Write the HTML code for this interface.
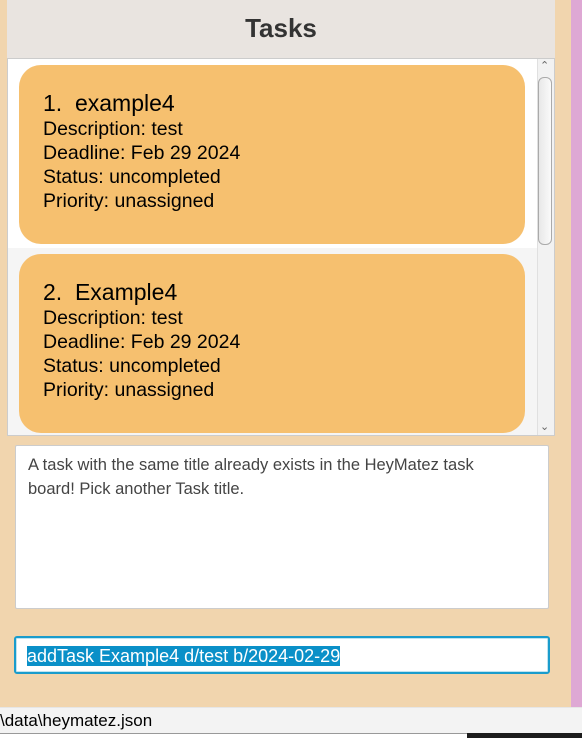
<!DOCTYPE html><html><head><style>
body{margin:0;width:582px;height:738px;position:relative;overflow:hidden;background:#f1d5ae;font-family:"Liberation Sans",sans-serif}
div{position:absolute;box-sizing:border-box}
.card{left:19px;width:506px;height:179px;background:#f6c06f;border-radius:22px;padding:24px 0 0 24px;font-size:19.5px;line-height:24px;color:#000}
.card .t{font-size:23px;line-height:28px;margin-bottom:0}
</style></head><body>
<div style="left:571px;top:0;width:11px;height:707px;background:#dea8d4"></div>
<div style="left:7px;top:0;width:548px;height:58px;background:#e9e4e0;text-align:center;font-weight:bold;font-size:26px;line-height:56px;color:#333">Tasks</div>
<div style="left:7px;top:58px;width:548px;height:378px;background:#fff;border:1px solid #ccc"></div>
<div style="left:8px;top:248px;width:529px;height:187px;background:#f5f5f5"></div>
<div class="card" style="top:65px"><div style="position:static" class="t">1.&nbsp;&nbsp;example4</div>Description: test<br>Deadline: Feb 29 2024<br>Status: uncompleted<br>Priority: unassigned</div>
<div class="card" style="top:254px"><div style="position:static" class="t">2.&nbsp;&nbsp;Example4</div>Description: test<br>Deadline: Feb 29 2024<br>Status: uncompleted<br>Priority: unassigned</div>
<div style="left:537px;top:59px;width:17px;height:376px;background:#f2f2f2;border-left:1px solid #e0e0e0"></div>
<div style="left:538px;top:77px;width:14px;height:168px;background:linear-gradient(90deg,#e8e8e8,#fafafa);border:1px solid #aaa;border-radius:6px"></div>
<div style="left:540px;top:59px;font-size:11px;color:#666">&#8963;</div>
<div style="left:540px;top:420px;font-size:11px;color:#666">&#8964;</div>
<div style="left:15px;top:445px;width:534px;height:164px;background:#fff;border:1px solid #ccc;border-radius:2px;padding:7px 30px 0 12px;font-size:16.5px;line-height:24px;color:#444">A task with the same title already exists in the HeyMatez task board! Pick another Task title.</div>
<div style="left:14px;top:636px;width:536px;height:38px;background:#fff;border:2px solid #1a9ccc;border-radius:3px;box-shadow:inset 0 0 0 1px #bfe3f0;padding:7px 0 0 11px;font-size:18px;line-height:23px"><span style="background:#0a90c8;color:#fff">addTask Example4 d/test b/2024-02-29</span></div>
<div style="left:0;top:707px;width:582px;height:26px;background:#f3f3f3;border-top:1px solid #e6e6e6;font-size:17px;line-height:26px;color:#000;padding-left:0">\data\heymatez.json</div>
<div style="left:0;top:733px;width:582px;height:5px;background:#fff;border-top:1px solid #999"></div>
<div style="left:467px;top:733px;width:115px;height:5px;background:#1c1c1c"></div>
</body></html>
